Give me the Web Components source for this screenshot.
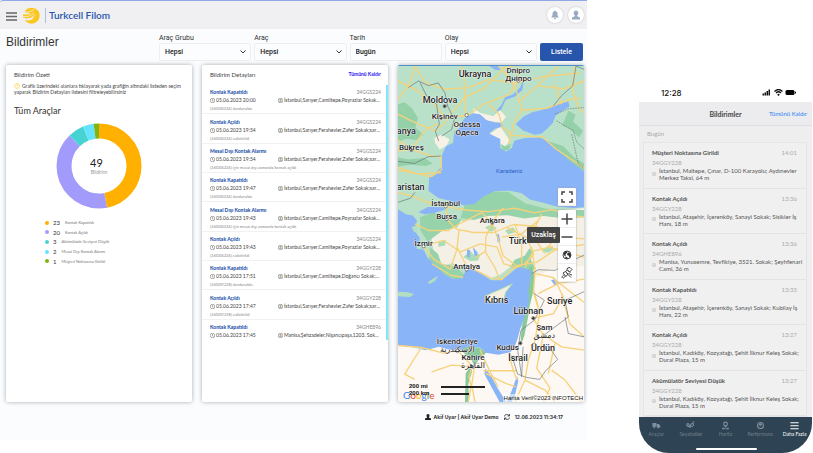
<!DOCTYPE html>
<html lang="tr">
<head>
<meta charset="utf-8">
<title>Turkcell Filom – Bildirimler</title>
<style>
  body { margin: 0; background: #fff; font-family: Lato, "Open Sans", "Liberation Sans", sans-serif; color: #333; }
</style>
</head>
<body>
<filom-showcase></filom-showcase>
<script>
const define = (name, render, setup) => customElements.define(name, class extends HTMLElement {
  connectedCallback() {
    if (this.shadowRoot) return;
    const root = this.attachShadow({ mode: 'open' });
    root.innerHTML = `<style>*{box-sizing:border-box}[hidden]{display:none}button,input,select{font:inherit;color:inherit;margin:0}</style>` + render(this);
    if (setup) setup(root, this);
  }
});

/* ---------- top bar ---------- */
define('app-header', () => `
<style>
  :host { display: flex; align-items: center; height: 29px; padding: 0 3px 0 6px; background: #f0f0f3; border-top: 1px solid #8ca8e8; border-radius: 3px 0 0 0; box-sizing: border-box; }
  button { border: 0; padding: 0; background: none; display: grid; place-items: center; }
  .menu { width: 11px; height: 10px; margin-top: 2px; }
  .logo { width: 17px; height: 17px; margin: 0 5px 0 6px; }
  .brand { border-left: 1px solid #a9c3e0; height: 15px; line-height: 14px; padding-left: 3px; font-size: 10px; font-weight: 600; color: #2855ac; text-decoration: none; font-family: Lato, sans-serif; }
  nav { margin-left: auto; display: flex; gap: 5px; }
  nav button { width: 16px; height: 16px; border-radius: 50%; background: #fff; box-shadow: 0 0 2px #bbb; }
  nav svg { width: 10px; height: 10px; fill: #9ba9c0; }
</style>
<button class="menu" aria-label="Menü"><svg width="11" height="9" viewBox="0 0 11 9"><path d="M0 1h11M0 4.500h11M0 8h11" stroke="#666" stroke-width="1.500"/></svg></button>
<svg class="logo" viewBox="0 0 48 48"><path d="M14 4C31-3 47 8 47 23c0 14-10 24-23 24-9 0-15-4-19-10 14 3 24-1 27-11-8 7-20 8-31 4C0 28 0 24 1 20c9 3 18 1 23-4C17 19 9 18 4 14c3-5 6-8 10-10z" fill="#fcc71d"/><path d="M3 13c10 4 20 0 29-7M1 27c14 2 22-3 30-11M2 35c14 2 24-4 31-14" fill="none" stroke="#f0f0f3" stroke-width="2.500"/></svg>
<a class="brand" href="#">Turkcell Filom</a>
<nav>
  <button aria-label="Bildirimler"><svg viewBox="0 0 20 20"><path d="M10 1c1 0 1.500.7 1.500 1.600C14 3.400 15 5.500 15 8c0 4 1 5 3 7H2c2-2 3-3 3-7 0-2.500 1-4.600 3.500-5.400C8.500 1.700 9 1 10 1zM8 16h4c0 1.500-1 2.500-2 2.500S8 17.500 8 16z"/></svg></button>
  <button aria-label="Hesap"><svg viewBox="0 0 20 20"><path d="M10 1c3 0 4.500 2 4.500 5 0 2-1 4-2.200 5v1.500L18 15v4H2v-4l5.700-2.500V11C6.500 10 5.500 8 5.500 6c0-3 1.500-5 4.500-5z"/></svg></button>
</nav>`);

/* ---------- filter field ---------- */
define('filter-field', el => `
<style>
  :host { display: grid; grid-template-rows: 9px 18px; flex: 1 1 0; min-width: 0; position: relative; font-family: Roboto, sans-serif; }
  label { font-size: 7px; line-height: 8px; color: #333; }
  select, input { width: 100%; min-width: 0; height: 18px; border: 1px solid #eceef1; border-radius: 2px; background: #fcfdff; padding: 0 5px; font-size: 7px; font-weight: 500; color: #222; appearance: none; }
  svg { position: absolute; right: 5px; bottom: 6px; width: 6px; height: 6px; pointer-events: none; }
</style>
<label for="f">${el.getAttribute('label')}</label>
${el.hasAttribute('text')
  ? `<input id="f" type="text" value="${el.getAttribute('value')}">`
  : `<select id="f"><option>${el.getAttribute('value')}</option></select><svg viewBox="0 0 12 12"><path d="M1 3l5 5 5-5" fill="none" stroke="#333" stroke-width="2"/></svg>`}`);

define('filter-bar', () => `
<style>
  :host { display: flex; align-items: start; height: 36px; padding: 5px 4px 0 6px; box-sizing: border-box; }
  h1 { width: 153px; flex: none; margin: 0; font: 400 12px/16px "Liberation Sans", sans-serif; color: #333; }
  form { flex: 1; display: flex; gap: 3px; align-items: end; min-width: 0; }
  button { flex: 0 0 43px; height: 18px; border: 0; border-radius: 2px; background: #2855ac; color: #fff; font: 500 7px Roboto, sans-serif; padding: 0; }
</style>
<h1>Bildirimler</h1>
<form>
  <filter-field label="Araç Grubu" value="Hepsi"></filter-field>
  <filter-field label="Araç" value="Hepsi"></filter-field>
  <filter-field label="Tarih" value="Bugün" text></filter-field>
  <filter-field label="Olay" value="Hepsi"></filter-field>
  <button type="button">Listele</button>
</form>`);

/* ---------- card ---------- */
define('panel-card', () => `
<style>
  :host { display: block; min-width: 0; background: #fff; border-radius: 2px; box-shadow: 0 0 4px #a9abad; overflow: hidden; }
</style><slot></slot>`);

/* ---------- summary ---------- */
const groups = [[23, 'Kontak Kapatıldı', '#ffb000'], [20, 'Kontak Açıldı', '#a29bfb'], [3, 'Akümülatör Seviyesi Düşük', '#48d3d3'], [2, 'Mesai Dışı Kontak Alarmı', '#64e4ff'], [1, 'Müşteri Noktasına Girildi', '#7fb412']];
define('summary-panel', () => {
  let from = 0;
  const arcs = groups.map(([n, , c]) => {
    const s = `<circle cx="43" cy="43" r="35" pathLength="49" fill="none" stroke="${c}" stroke-width="15" stroke-dasharray="${n} 49" stroke-dashoffset="${-from}"/>`;
    from += n; return s;
  }).join('');
  return `
<style>
  :host { display: block; padding: 5px 8px; }
  h2 { margin: 0; font-size: 6px; line-height: 10px; font-weight: 400; color: #444; }
  p { margin: 3px 0 0; font-size: 5px; line-height: 6px; color: #444; }
  p svg { width: 6px; height: 6px; vertical-align: -1px; margin-right: 2px; }
  h3 { margin: 11px 0 0; font-size: 9px; line-height: 10px; font-weight: 400; color: #333; }
  .chart { display: grid; width: 86px; height: 86px; margin: 7px auto 0; }
  .chart > * { grid-area: 1 / 1; }
  .chart svg { width: 86px; height: 86px; }
  .total { place-self: center; text-align: center; font-size: 5px; line-height: 6px; color: #999; }
  .total b { display: block; font-size: 11px; line-height: 12px; font-weight: 400; color: #222; }
  ul { list-style: none; margin: 9px 0 0 31px; padding: 0; display: grid; grid-auto-rows: 1fr; height: 48px; }
  li { display: flex; align-items: center; font-size: 4px; color: #777; }
  i { width: 4px; height: 4px; border-radius: 50%; margin-right: 4px; }
  b { font-size: 6px; font-weight: 400; color: #333; margin-right: 5px; }
</style>
<h2>Bildirim Özeti</h2>
<p><svg viewBox="0 0 12 12"><circle cx="6" cy="6" r="5" fill="none" stroke="#fcc71d"/><path d="M4.500 4.500c0-2 3-2 3 0C7.500 6 6 6 6 7.500M6 8.500v1" fill="none" stroke="#fcc71d"/></svg>Grafik üzerindeki alanlara tıklayarak yada grafiğin altındaki listeden seçim yaparak Bildirim Detayları listesini filtreleyebilirsiniz</p>
<h3>Tüm Araçlar</h3>
<div class="chart"><svg viewBox="0 0 86 86"><g transform="rotate(-90 43 43)">${arcs}</g></svg><div class="total"><b>49</b>Bildirim</div></div>
<ul>${groups.map(([n, t, c]) => `<li><i style="background:${c}"></i><b>${n}</b>${t}</li>`).join('')}</ul>`;
});

/* ---------- details ---------- */
define('event-row', el => {
  const a = n => el.getAttribute(n) || '';
  return `
<style>
  :host { display: grid; grid-template-columns: 68px minmax(0, 1fr); grid-template-rows: 8px 8px 9px; align-content: end; padding: 0 7px 0 8px; border-bottom: 1px solid #f0f1f3; font-size: 5px; line-height: 8px; color: #444; white-space: nowrap; box-sizing: border-box; }
  b { color: #2855ac; font-weight: 900; grid-column: 1; }
  .plate { text-align: right; color: #888; }
  .place { overflow: hidden; text-overflow: ellipsis; }
  .note { grid-column: 1 / 3; color: #888; font-size: 4px; line-height: 9px; }
  svg { width: 5px; height: 5px; vertical-align: -1px; margin-right: 1px; fill: none; stroke: #555; }
</style>
<b>${a('name')}</b><span class="plate">${a('plate')}</span>
<span><svg viewBox="0 0 10 10"><circle cx="5" cy="5" r="4.500"/><path d="M5 2v3.500l2 1"/></svg>${a('time')}</span>
<span class="place"><svg viewBox="0 0 10 10"><circle cx="5" cy="5" r="4.500"/><circle cx="5" cy="4" r="1.500"/><path d="M3 6l2 2 2-2"/></svg>${a('place')}</span>
<span class="note">${a('note')}</span>`;
});
const P = 'İstanbul,Sarıyer,Camiitepe,Poyrazlar Sokak;sarıyer,İstanbul', Z = 'İstanbul,Sarıyer,Ferahevler,Zafer Sokak;sarıyer,İstanbul', D = 'İstanbul,Sarıyer,Camiitepe,Doğancı Sokak;sarıyer,İstanbul';
const K = 'Kontak Kapatıldı', A = 'Kontak Açıldı', M = 'Mesai Dışı Kontak Alarmı', outOfHours = 'için mesai dışı zamanda kontak açıldı';
const events = [
  [K, '34GGS224', '20:00', P, 'durduruldu'], [A, '34GGS224', '19:54', Z, 'calistirildi'], [M, '34GGS224', '19:54', Z, outOfHours],
  [K, '34GGS224', '19:47', Z, 'durduruldu'], [M, '34GGS224', '19:43', P, outOfHours], [A, '34GGS224', '19:43', P, 'calistirildi'],
  [K, '34GGY228', '17:51', D, 'durduruldu'], [A, '34GGY228', '17:47', Z, 'calistirildi'], [K, '34GHE896', '17:45', 'Manisa,Şehzadeler,Nişancıpaşa,1203. Sokak;akhisar,Manisa', '']];
define('details-panel', () => `
<style>
  :host { display: block; padding-top: 4px; }
  header { display: flex; justify-content: space-between; align-items: center; padding: 0 7px 0 8px; height: 10px; }
  h2 { margin: 0; font-size: 6px; font-weight: 400; color: #444; }
  a { font-size: 5px; font-weight: 700; color: #2a20f0; text-decoration: none; }
  .list { display: grid; grid-auto-rows: 1fr; height: 264px; margin-top: 6px; position: relative; }
  .thumb { position: absolute; right: 0; top: 0; bottom: 9px; width: 2px; background: #7fe9fb; }
  event-row:last-of-type { border-color: #fff; }
</style>
<header><h2>Bildirim Detayları</h2><a href="#">Tümünü Kaldır</a></header>
<div class="list">${events.map(([n, p, t, l, s]) => `<event-row name="${n}" plate="${p}" time="05.06.2023 ${t}" place="${l}" note="${s ? `(${p}) ${s}` : ''}"></event-row>`).join('')}<div class="thumb"></div></div>`);

/* ---------- map ---------- */
define('map-label', el => `
<style>
  :host { position: absolute; left: ${(el.getAttribute('x') - 9) / 5.58}%; top: ${(el.getAttribute('y') - 15) / 10.11}%; transform: translate(-50%, -50%); font: 500 8px/8px Roboto, "DejaVu Sans", sans-serif; color: #222; text-align: center; white-space: pre; text-shadow: 0 0 1px #fff, 0 0 1px #fff, 0 0 2px #fff; }
  :host([big]) { font-size: 9px; }
  :host([sea]) { font-size: 6px; font-weight: 400; color: #2d62c4; text-shadow: none; }
</style><slot></slot>`);

const labels = [['Ukrayna', 240, 28, 'big'], ['Dnipro\nДніпро', 370, 30], ['Moldova', 135, 105, 'big'], ['Kişinev', 149, 155], ['Odessa\nОдеса', 216, 192], ['anya', 34, 200, 'big'], ['Bükreş', 49, 250], ['aristan', 47, 366, 'big'], ['Karadeniz', 343, 320, 'sea'], ['İstanbul', 152, 419], ['Bursa', 155, 458], ['Ankara', 292, 470], ['İzmir', 86, 540], ['Türk', 368, 531, 'big'], ['Antalya', 215, 609], ['Kıbrıs', 305, 708, 'big'], ['Suriye', 494, 710, 'big'], ['Lübnan', 400, 741, 'big'], ['Şam\nدمشق', 448, 804], ['İskenderiye\nالإسكندرية', 187, 844], ['Kudüs', 338, 850], ['Ürdün', 444, 850, 'big'], ['İsrail', 369, 882, 'big'], ['Kahire\nالقاهرة', 234, 893]];

define('event-map', () => `
<style>
  :host { display: block; position: relative; height: 100%; overflow: hidden; background: #8ab4f8; border-top: 1px solid #4d90cd; box-sizing: border-box; }
  .geo { display: block; width: 100%; height: 100%; }
  .controls { position: absolute; right: 8px; top: 122px; width: 18px; display: grid; gap: 4px; }
  .group { display: grid; background: #fff; border-radius: 1px; box-shadow: 0 0 2px #999; }
  .group button { border: 0; border-bottom: 1px solid #eee; padding: 0; height: 18px; background: none; display: grid; place-items: center; }
  .group svg { width: 12px; height: 12px; fill: none; stroke: #444; stroke-width: 2; }
  .tip { position: absolute; right: 24px; top: 161px; width: 33px; height: 16px; background: #444; color: #fff; border-radius: 1px; font: 500 7px/16px Roboto, sans-serif; text-align: center; }
  .google { position: absolute; left: 5px; bottom: 1px; font: 400 10px/12px Lato, sans-serif; }
  .scale { position: absolute; left: 11px; bottom: 5px; display: grid; grid-template-columns: 32px 44px; align-items: center; font: 700 6px/7px "Liberation Sans", sans-serif; color: #111; }
  .scale i { height: 2px; background: #222; }
  .scale .km { width: 28px; }
  .credit { position: absolute; right: 0; bottom: 0; padding: 0 1px; background: #fff8; font: 400 6px/8px "Liberation Sans", sans-serif; color: #111; white-space: nowrap; }
</style>
<svg class="geo" viewBox="9 15 558 1011" preserveAspectRatio="none" aria-label="Harita">
  <rect x="9" y="15" width="558" height="1011" fill="#b9e1c9"/>
  <path fill="#94d0a8" d="M9 130l20-6 22 18 18 30-8 28 25 22-22 16-30-4-25 8zM9 290l30 6 50-4 24 16-20 8-50-4-34 6zM455 240l50 16 30 32 32 20v22l-40-20-36-32zM520 150l22 12-8 20 30 28-12 20-28-26-22-10z"/>
  <path fill="#f5f0e5" d="M110 500l50-26 50 8 60-22 70-14 70-6 60 12 97-10v210l-60 6-70 6-40-16-50-30-30 24-30 12-40-12-40-22-36-12-30 10-20-22-10-50z"/>
  <path fill="#fdf8f3" d="M9 850l60 10 120-6 70 14 90-8 30-90 25-104 60-40 103-10v410H9z"/>
  <path fill="#96d2aa" d="M210 430l50-28 30-10 50 2 50 34 60 16 60 4 57 0v22l-60 4-60-8-60 8-50-10-60 2-40 12-40-6zM75 470l40-15 40 22 45-2-14 26-42 8-46 34-22-34zM105 560l24 20 10 30 40 8 30 24-16 20-30-12-36-14-24-34zM345 620l14-22 30-12 14-22 14 10-10 24 16 26-25 12z"/>
  <g fill="#a9dcb9"><path d="M205 590l20-18 12 12 20-4-8 20-24 2zM270 500l20-8 16 12-20 10zM130 545l24-6-4 16-20 4zM330 510l24-10 10 14-24 8zM430 520l28-8 16 12-34 8zM440 570l20-14 20 8-22 14z"/></g>
  <path fill="#89ca9d" d="M400 625l12-8 8 40-6 40-10 40-4 30-12 60-12 32 4-60 10-50zM190 862l34-4 30 6 20 14-20 16-16 26-8-20-22-20zM212 940l12-18 8 10-12 40 2 54h-12z"/>
  <g fill="#f7f2e7"><path d="M118 232l22-10 24 14-10 20-20 10-14-20zM235 142l20 14 40 10 20-18 18 20-14 18-40-6-44-18zM286 218l30-20 14 20 16 24-20 16-24-18z"/></g>
  <g fill="#8ab4f8">
    <path d="M100 390L103 348L120 340L138 320L140 285L153 256L174 247L178 212L192 202L203 180L218 163L235 157L255 160L275 178L300 185L320 186L325 196L300 204L282 218L316 235L316 262L333 272L350 262L358 240L390 232L435 230L455 240L495 275L530 305L567 332V440L535 442L485 438L450 428L405 417L380 398L345 390L300 391L265 408L238 430L205 434L170 422L130 412z"/>
    <path d="M362 190L385 168L412 154L450 145L486 130L520 122L524 137L502 150L482 164L474 186L455 205L440 218L420 222L385 210z"/>
    <path d="M300 155l20-24 10-22 24-8 22-22 6-18 4 2-4 24-22 20-28 10-14 30zM282 15l26 0 12 12-18 0z"/>
    <path d="M9 446L34 462L52 464L66 480L58 510L74 532L72 556L88 572L96 590L110 604L130 624L150 644L176 656L202 654L212 630L234 624L260 640L288 660L318 660L345 640L368 620L390 624L408 630L406 660L400 690L402 725L388 770L376 805L368 835L358 862L346 876L310 884L272 878L255 862L218 858L190 872L160 868L132 860L92 870L58 862L30 858L9 856z"/>
    <path d="M70 455l28-16 44 0 10 8-34 10-30 4zM272 925l16 22 20 38 26 41h-20l-24-44-22-40zM366 947l4 16-10 42-10 21h-14l14-34zM304 520l8 2 4 20-8 4zM216 566l10 4-2 22-8-4zM234 560l14 16-2 12-8-4zM468 660l14-4 8 14-10 6zM382 640l14 4-2 8-8-2z"/>
  </g>
  <g fill="#b4dec2"><path d="M50 500l12-4 6 14-10 6zM66 556l14 2-2 10-14-4zM100 664l16-10 14-8-10 16-18 10zM9 694l30 2 18 6-12 8-36-2z"/></g>
  <path fill="#f4efdf" stroke="#a9d8b6" stroke-width="3" d="M270 708l24-12 20-8 38-18-20 26-4 18-26 12-24-4z"/>
  <path fill="#94d0a8" d="M318 250l14 8 16-10-6 18-18 4z"/>
  <g fill="none" stroke="#f6d37a" stroke-width="4" stroke-linejoin="round">
    <path d="M9 60l60 30 50 40 30 40 70-6 50-36 70-26 30-40 0-47M9 160l40 20 70 30 26-20 34-46 30-34 60-30 60-60 28-5M200 15l10 60 0 85M60 15l30 50 60 20 70-5 60-24 80 10 90-20 104-10M310 15l40 42 20 50 10 42 80-8 60-24 38-6M380 149l-20 30-20 70M282 130l30 30 10 40 30 24 90 4 40 36 88 60M567 60l-60 24-80-10-57 50M430 70l60-55M540 15l-8 70 20 60 15 10M9 270l40-4 60 20 30 2 0 40-30 20-50-10-50-10M49 268l-40-30M49 268l40-60 40-20M60 15l-20 60-31 40M480 70l20 60M9 320l60 20 70-4"/>
    <path d="M9 395l40 10 50 20 60 14 60 10 60 4 80-10 60 14 50-10 60 18 38 4M155 438l0 38 30 30 50 10 60 0 60-24 70 6 60 30 92 8M60 490l40 20 60 0 40-24 60-30 30 30 20 50 14 50 40 30 60-10 60-40 83-14M86 556l60-16 50 34 60-24 50 10 20 50 40 12M86 556l30 40 50 30 20-60 6-60M186 560l30 60M110 610l60 36 34 4M230 624l60 30 30 4 30-30 36-16 30-30-20-50-60-30M292 482l-20 50 0 40-30 20M292 482l34-40M270 572l30 50 14 36M360 492l20 60 0 60M440 460l-30 60 40 60M500 500l-40 60 107 30M320 530l60-10 50-40M390 622l24-50 60-14M410 560l10 70-4 60 14 50"/>
    <path d="M420 640l50 10 50 40 47 36M430 700l60-30 77-14M414 690l20 70-14 80-20 60-10 60-30 66M415 774l60-14 30-50-30-60M415 774l30 50-20 100 40 60-20 42M440 820l60 40 67 10M500 700l24 90 43 40M9 856l70 6 70 18 38-10 48 52M79 862l-50 80 30 16M110 935l60-20 62 4M232 919l-10 30 6 30-8 47M238 925l-8 50 10 51M255 870l28 60 26 50M265 932l100 0M272 940l60 30 30 10M340 880l18 60 8 20M390 960l60 30 30 36M470 930l40 30 50 66M480 850l-20 90"/>
  </g>
  <g fill="none" stroke="#69737a" stroke-width="2">
    <path d="M40 80l30-20 30 14 30-8 20 30 8 40 20 40-8 30-30 20M75 65l20 40 30 26 8 60-12 20 10 30M9 302l50 6 40-20 38-2M567 25l-24-10-10 60-34 30-24 30M60 395l-14 18-37 12M410 640l20-12 50 2 40-24 47-22M418 700l30 20-30 60-40 30-10 60 12 80 4-90M350 886l18 56 26 10 40 6 18-26 36-34-30-44M440 830l80-60-10-50 57-26M510 770l10 50 47 10"/>
    <path stroke-dasharray="5 3" d="M480 160l40-16 47-4M485 180l50 30 10 34 22 20M530 220l20 90 17 12"/>
  </g>
  <g fill="#fff" stroke="#444" stroke-width="2"><circle cx="370" cy="59" r="5"/><circle cx="215" cy="163" r="5"/><circle cx="152" cy="437" r="5"/><circle cx="155" cy="475" r="5"/><circle cx="86" cy="557" r="5"/><circle cx="215" cy="627" r="5"/><circle cx="187" cy="873" r="5"/></g>
  <g fill="#333" stroke="#999" stroke-width="3"><circle cx="149" cy="136" r="5"/><circle cx="49" cy="268" r="5"/><circle cx="292" cy="487" r="5"/><circle cx="415" cy="774" r="5"/><circle cx="376" cy="849" r="5"/><circle cx="234" cy="920" r="5"/></g>
</svg>
${labels.map(([t, x, y, k]) => `<map-label x="${x}" y="${y}" ${k || ''}>${t}</map-label>`).join('')}
<div class="google" aria-label="Google"><span style="color:#4285f4">G</span><span style="color:#ea4335">o</span><span style="color:#fbbc05">o</span><span style="color:#4285f4">g</span><span style="color:#34a853">l</span><span style="color:#ea4335">e</span></div>
<div class="scale"><span>200 mi</span><i></i><span>200 km</span><i class="km"></i></div>
<div class="credit">Harita Veril©2023 INFOTECH</div>
<div class="controls">
  <div class="group"><button aria-label="Tam ekran"><svg viewBox="0 0 24 24"><path d="M2 8V2h6M16 2h6v6M22 16v6h-6M8 22H2v-6" stroke-width="3"/></svg></button></div>
  <div class="group">
    <button aria-label="Yakınlaş"><svg viewBox="0 0 24 24"><path d="M12 1v22M1 12h22" stroke-width="3"/></svg></button>
    <button aria-label="Uzaklaş"><svg viewBox="0 0 24 24"><path d="M1 12h22" stroke-width="3"/></svg></button>
    <button aria-label="Dünya"><svg viewBox="0 0 24 24"><circle cx="12" cy="12" r="8"/><path fill="#333" stroke="none" d="M5 8l5-4 3 1-1 3-3 2 1 3-3 1zM14 5l5 4 1 5-3 3-2-4-3-1 1-4 3-1zM8 15l4 1 2 3-4 1z"/></svg></button>
    <button aria-label="Uydu"><svg viewBox="0 0 24 24"><path d="M13 2l5-1 4 4-5 5-5-5zM9 9l4-3 5 5-4 4zM4 12l5-3 5 5-4 5zM2 22c0-4 3-6 5-6M5 23c0-2 2-4 4-4M15 16l5 5M17 15l5 1"/></svg></button>
  </div>
</div>
<div class="tip" role="tooltip">Uzaklaş</div>`);

/* ---------- footer ---------- */
define('status-footer', () => `
<style>
  :host { display: flex; align-items: center; justify-content: flex-end; height: 30px; padding-right: 24px; font: 700 5px/8px Inter, "Liberation Sans", sans-serif; color: #333; }
  svg { width: 6px; height: 6px; margin-right: 3px; }
  .sync { margin: 0 5px 0 5px; }
</style>
<svg viewBox="0 0 12 12"><path fill="#222" d="M6 0c2 0 3 1.500 3 3S8 7 7.500 7L12 9v3H0V9l4.500-2C4 7 3 4.500 3 3s1-3 3-3z"/></svg>
<span>Akif Uyar | Akif Uyar Demo</span>
<svg class="sync" viewBox="0 0 12 12"><path fill="none" stroke="#222" stroke-width="1.500" d="M1 5c0-5 8-5 9.500-1M11 0v4H7M11 7c0 5-8 5-9.500 1M1 12V8h4"/></svg>
<time>12.06.2023 11:34:17</time>`);

/* ---------- dashboard ---------- */
define('web-dashboard', () => `
<style>
  :host { display: block; min-width: 0; background: #fafcfe; align-self: start; }
  main { display: grid; grid-template-columns: repeat(3, minmax(0, 1fr)); gap: 10px; padding: 0 3px 0 6px; height: 337px; }
  status-footer { margin-bottom: 8px; }
</style>
<app-header></app-header>
<filter-bar></filter-bar>
<main>
  <panel-card><summary-panel></summary-panel></panel-card>
  <panel-card><details-panel></details-panel></panel-card>
  <panel-card><event-map></event-map></panel-card>
</main>
<status-footer></status-footer>`);

/* ---------- phone ---------- */
define('phone-event', el => {
  const a = n => el.getAttribute(n);
  return `
<style>
  :host { display: grid; grid-template-columns: 7px minmax(0, 1fr) auto; grid-template-rows: 10px 8px 15px; align-content: start; padding: 5px 9px 0 8px; border-bottom: 1px solid #e4e4e6; font-size: 6px; line-height: 7px; color: #555; }
  h3 { grid-column: 1 / 3; margin: 0; font-size: 6px; line-height: 10px; font-weight: 700; color: #505050; }
  time { color: #aaa; line-height: 10px; }
  .plate { grid-column: 1 / 4; color: #aaa; line-height: 9px; }
  svg { width: 4px; height: 4px; align-self: center; fill: none; stroke: #aaa; }
  p { grid-column: 2 / 4; margin: 1px 0 0; white-space: nowrap; }
</style>
<h3>${a('name')}</h3><time>${a('time')}</time><span class="plate">${a('plate')}</span>
<svg viewBox="0 0 10 10"><circle cx="5" cy="5" r="4.500"/><path d="M3 6l4-3-2 5z"/></svg><p>${a('place')}</p>`;
});
const mobile = [
  ['Müşteri Noktasına Girildi', '14:01', '34GGY228', 'İstanbul, Maltepe, Çınar, D-100 Karayolu; Aydınevler<br>Merkez Taksi, 64 m'],
  [A, '13:36', '34GGY228', 'İstanbul, Ataşehir, İçerenköy, Sanayi Sokak; Sisikler İş<br>Hanı, 18 m'],
  [A, '13:36', '34GHE896', 'Manisa, Yunusemre, Tevfikiye, 3521. Sokak; Şeyhfenari<br>Cami, 36 m'],
  [K, '13:35', '34GGY228', 'İstanbul, Ataşehir, İçerenköy, Sanayi Sokak; Kubilay İş<br>Hanı, 22 m'],
  [A, '13:27', '34GGY228', 'İstanbul, Kadıköy, Kozyatağı, Şehit İlknur Keleş Sokak;<br>Dural Plaza, 15 m'],
  ['Akümülatör Seviyesi Düşük', '13:27', '34GGY228', 'İstanbul, Kadıköy, Kozyatağı, Şehit İlknur Keleş Sokak;<br>Dural Plaza, 15 m']];
const tabs = [
  ['Araçlar', '<path d="M1 5h11v10H1zM13 8h5l4 4v5h-9z"/><circle cx="6" cy="17" r="2.500"/><circle cx="17" cy="17" r="2.500"/>'],
  ['Seyahatler', '<path fill="none" stroke="#7f8e9a" stroke-width="3" d="M2 10c0-4 6-4 6 0s4 4 5 0 7-5 7-1-6 8-10 7-8-2-8-6zM18 3l4-1"/>'],
  ['Harita', '<circle cx="12" cy="8" r="5" fill="none" stroke="#7f8e9a" stroke-width="3"/><path d="M8 13h8l-4 5zM3 18h5l4 3 4-3h5v4H3z"/>'],
  ['Performans', '<circle cx="12" cy="12" r="8" fill="none" stroke="#7f8e9a" stroke-width="3"/><path d="M7 10c3-5 7-5 10 0l-4 1-2 4-2-4z"/>'],
  ['Daha Fazla', '<path fill="#fff" d="M1 3h22v3H1zM1 11h22v3H1zM1 19h22v3H1z"/>']];
define('mobile-app', () => `
<style>
  :host { display: flex; flex-direction: column; min-width: 0; margin-top: 82px; background: #eeeeef; border-radius: 24px 24px 30px 30px; overflow: hidden; }
  .status { display: flex; justify-content: space-between; align-items: center; height: 20px; padding: 1px 16px 0 22px; background: #fff; font: 500 8px/10px Inter, sans-serif; color: #111; }
  .status svg { width: 34px; height: 7px; }
  header { display: grid; grid-template-columns: 1fr auto 1fr; align-items: center; height: 24px; padding: 0 5px; background: #ececee; border-bottom: 1px solid #e0e0e2; }
  h1 { grid-column: 2; margin: 0; font: 700 7px Lato, sans-serif; color: #444; }
  a { justify-self: end; font-size: 6px; color: #2a84f5; text-decoration: none; }
  h2 { margin: 0; padding-left: 8px; font-size: 6px; line-height: 16px; font-weight: 400; color: #aaa; }
  .list { display: grid; grid-auto-rows: 1fr; height: 275px; margin: 0 5px 0 4px; background: #f0f0f1; border: 1px solid #e5e5e7; }
  nav { background: #2e4353; display: grid; grid-template-columns: repeat(5, minmax(0, 1fr)); height: 36px; align-content: start; padding-top: 4px; position: relative; }
  button { border: 0; background: none; padding: 0; display: grid; justify-items: center; font-size: 5px; line-height: 8px; color: #71818d; }
  button:last-of-type { color: #fff; }
  nav svg { width: 9px; height: 9px; fill: #7f8e9a; }
  .home { position: absolute; bottom: 3px; left: 33%; right: 32%; height: 2px; border-radius: 1px; background: #fff; }
</style>
<div class="status"><span>12:28</span><svg viewBox="0 0 68 14"><path d="M1 9h3v4H1zM5 7h3v6H5zM9 4h3v9H9zM13 1h3v12h-3z" fill="#111"/><path d="M25 5c5-5 11-5 16 0M28 8c3-3 7-3 10 0" fill="none" stroke="#111" stroke-width="2.500"/><circle cx="33" cy="11.500" r="2"/><rect x="47" y="2" width="18" height="10" rx="3"/><rect x="66" y="5" width="2" height="4" rx="1"/></svg></div>
<header><h1>Bildirimler</h1><a href="#">Tümünü Kaldır</a></header>
<h2>Bugün</h2>
<div class="list">${mobile.map(([n, t, p, l]) => `<phone-event name="${n}" time="${t}" plate="${p}" place="${l}"></phone-event>`).join('')}</div>
<nav>${tabs.map(([t, i]) => `<button><svg viewBox="0 0 24 24">${i}</svg>${t}</button>`).join('')}<div class="home"></div></nav>`);

define('filom-showcase', () => `
<style>
  :host { display: grid; grid-template-columns: minmax(0, 587fr) minmax(0, 173fr); column-gap: 52px; padding-right: 1px; }
</style>
<web-dashboard></web-dashboard>
<mobile-app></mobile-app>`);
</script>
</body>
</html>
